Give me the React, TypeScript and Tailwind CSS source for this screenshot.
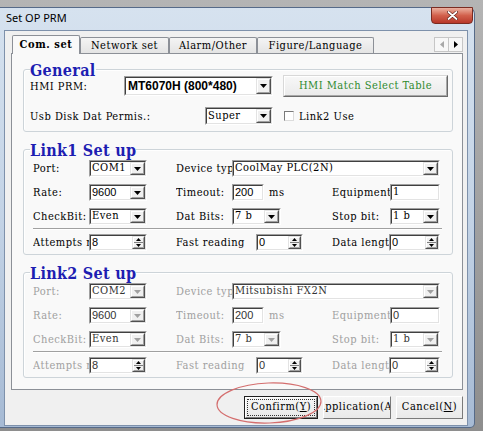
import React from 'react';

const SERIF = "font-['DejaVu_Serif_Condensed','DejaVu_Serif',serif] text-[11px] tracking-[0.5px] whitespace-nowrap";
const SANS = "font-['Liberation_Sans',Arial,sans-serif] text-[11px] whitespace-nowrap";

type Kids = { children?: React.ReactNode };

const Tri: React.FC<{ up?: boolean; grey?: boolean; small?: boolean }> = ({ up, grey, small }) => {
    const fill = grey ? '#a0a0a0' : '#000';
    if (small) {
        return (
            <svg width="5" height="3" viewBox="0 0 5 3">
                <path d={up ? 'M2.5 0L5 3H0z' : 'M0 0h5L2.5 3z'} fill={fill} />
            </svg>
        );
    }
    return (
        <svg width="7" height="4" viewBox="0 0 7 4">
            <path d="M0 0h7L3.5 4z" fill={fill} />
        </svg>
    );
};

// sunken classic field
const Field: React.FC<Kids & { className: string }> = ({ className, children }) => (
    <div className={`flex border border-t-[#a0a0a0] border-l-[#a0a0a0] border-b-white border-r-white ${className}`}>
        <div className="flex-1 min-w-0 flex border border-t-[#404040] border-l-[#404040] border-b-[#e3e3e3] border-r-[#e3e3e3] bg-white">
            {children}
        </div>
    </div>
);

const Raised: React.FC<Kids & { className: string }> = ({ className, children }) => (
    <div className={`flex border border-t-[#e3e3e3] border-l-[#e3e3e3] border-b-[#505050] border-r-[#505050] ${className}`}>
        <div className="flex-1 flex flex-col items-center justify-center border border-t-white border-l-white border-b-[#a0a0a0] border-r-[#a0a0a0] bg-[#f0f0f0]">
            {children}
        </div>
    </div>
);

const Combo: React.FC<{ w: string; h?: string; value: string; vcls?: string; grey?: boolean; dim?: boolean }> = ({ w, h = 'h-[17px]', value, vcls = SERIF, grey, dim }) => (
    <Field className={`${w} ${h}`}>
        <div className={`flex-1 min-w-0 overflow-hidden flex items-center pl-[1px] ${vcls} ${dim ? 'text-[#333]' : 'text-black'}`}>{value}</div>
        <Raised className="w-[15px]">
            <Tri grey={grey} />
        </Raised>
    </Field>
);

const Spin: React.FC<{ w: string; value: string; dim?: boolean }> = ({ w, value, dim }) => (
    <Field className={`${w} h-[17px]`}>
        <div className={`flex-1 min-w-0 flex items-center pl-[1px] ${SANS} ${dim ? 'text-[#333]' : 'text-black'}`}>{value}</div>
        <Raised className="w-[13px]">
            <Tri up small />
            <div className="w-full h-px bg-[#808080] my-[1px]" />
            <Tri small />
        </Raised>
    </Field>
);

const Input: React.FC<{ w: string; value: string; vcls: string; dim?: boolean }> = ({ w, value, vcls, dim }) => (
    <Field className={`${w} h-[17px]`}>
        <div className={`flex-1 flex items-center pl-[1px] ${vcls} ${dim ? 'text-[#333]' : 'text-black'}`}>{value}</div>
    </Field>
);

const Lbl: React.FC<Kids & { w: string; grey?: boolean }> = ({ w, grey, children }) => (
    <div className={`${w} shrink-0 overflow-hidden leading-[17px] ${SERIF} ${grey ? 'text-[#a0a0a0]' : 'text-black'}`}>{children}</div>
);

const Legend: React.FC<Kids> = ({ children }) => (
    <legend className="ml-[6px] pt-[4px] leading-[12px] font-['DejaVu_Serif_Condensed','DejaVu_Serif',serif] font-bold text-[16px] tracking-[0.3px] text-[#1e1eb2]">
        {children}
    </legend>
);

type LinkData = {
    title: string;
    port: string;
    device: string;
    equip: string;
    equipCls: string;
    off?: boolean;
};

const LinkBox: React.FC<LinkData> = ({ title, port, device, equip, equipCls, off }) => (
    <fieldset className="mt-[9px] border border-[#cdd4d9] rounded-[3px] shadow-[inset_1px_1px_0_#fff]">
        <Legend>{title}</Legend>
        <div className="pl-[9px] pb-[3px]">
            <div className="mt-[3px] flex items-center h-[17px]">
                <Lbl w="w-[56px]" grey={off}>Port:</Lbl>
                <Combo w="w-[58px]" value={port} grey={off} dim={off} />
                <div className="w-[29px]" />
                <Lbl w="w-[56px]" grey={off}>Device type</Lbl>
                <Combo w="w-[208px]" value={device} grey={off} dim={off} />
            </div>
            <div className="mt-[7px] flex items-center h-[17px]">
                <Lbl w="w-[56px]" grey={off}>Rate:</Lbl>
                <Combo w="w-[58px]" value="9600" vcls={SANS} grey={off} dim={off} />
                <div className="w-[29px]" />
                <Lbl w="w-[56px]" grey={off}>Timeout:</Lbl>
                <Input w="w-[32px]" value="200" vcls={SANS} dim={off} />
                <div className={`w-[68px] pl-[5px] leading-[17px] ${SERIF} ${off ? 'text-[#a0a0a0]' : 'text-black'}`}>ms</div>
                <Lbl w="w-[58px]" grey={off}>Equipment</Lbl>
                <Input w="w-[50px]" value={equip} vcls={equipCls} dim={off} />
            </div>
            <div className="mt-[7px] flex items-center h-[17px]">
                <Lbl w="w-[56px]" grey={off}>CheckBit:</Lbl>
                <Combo w="w-[58px]" value="Even" grey={off} dim={off} />
                <div className="w-[29px]" />
                <Lbl w="w-[56px]" grey={off}>Dat Bits:</Lbl>
                <Combo w="w-[49px]" value="7 b" grey={off} dim={off} />
                <div className="w-[51px]" />
                <Lbl w="w-[58px]" grey={off}>Stop bit:</Lbl>
                <Combo w="w-[50px]" value="1 b" grey={off} dim={off} />
            </div>
            <div className="mt-[3px] w-[409px] h-[2px] border-t border-b border-t-[#a0a0a0] border-b-white" />
            <div className="mt-[4px] flex items-center h-[17px]">
                <Lbl w="w-[56px]" grey={off}>Attempts number</Lbl>
                <Spin w="w-[58px]" value="8" dim={off} />
                <div className="w-[29px]" />
                <Lbl w="w-[80px]" grey={off}>Fast reading</Lbl>
                <Spin w="w-[47px]" value="0" dim={off} />
                <div className="w-[29px]" />
                <Lbl w="w-[57px]" grey={off}>Data length</Lbl>
                <Spin w="w-[51px]" value="0" dim={off} />
            </div>
        </div>
    </fieldset>
);

const Tab: React.FC<Kids & { w: string }> = ({ w, children }) => (
    <div className={`${w} h-[16px] shrink-0 flex items-center justify-center border border-b-0 border-[#8c9097] rounded-t-[2px] bg-gradient-to-b from-[#f4f4f4] to-[#e4e4e4] ${SERIF} leading-[14px] text-black`}>
        {children}
    </div>
);

const PushBtn: React.FC<Kids & { w: string; def?: boolean }> = ({ w, def, children }) => (
    <div className={`${w} h-[23px] flex ${def ? 'border border-[#202020]' : ''}`}>
        <div className="flex-1 min-w-0 flex border border-t-white border-l-white border-b-[#7a7a7a] border-r-[#7a7a7a] bg-gradient-to-b from-[#f6f6f6] to-[#e9e9e9]">
            <div className={`flex-1 min-w-0 overflow-hidden flex items-center justify-center ${def ? 'm-[1px] border border-dotted border-[#333]' : ''} ${SERIF} text-black`}>
                {children}
            </div>
        </div>
    </div>
);

export default function App() {
    return (
        <div className="relative w-[483px] h-[431px] overflow-hidden bg-gradient-to-b from-[#b4b4b4] to-[#8e8e8e] pt-[7px]">
            <div className="w-[475px] h-[421px] flex flex-col pl-[4px] pr-[6px] pb-[1px] border-t border-r border-b border-[#566a88] rounded-tr-[7px] rounded-br-[5px] bg-gradient-to-b from-[#d6e2ef] via-[#c3d3e6] to-[#a6bad4]">
                {/* title bar */}
                <div className="h-[22px] shrink-0 flex items-start justify-between">
                    <div className="pl-[2px] pt-[3px] font-['Noto_Sans',sans-serif] text-[11px] leading-[14px] text-black">Set OP PRM</div>
                    <div className="-mt-px mr-[-5px] w-[42px] h-[17px] rounded-b-[4px] border border-[#7a2c22] bg-gradient-to-b from-[#eab0a0] via-[#d2604c] to-[#b8372a] flex items-center justify-center">
                        <svg width="11" height="9" viewBox="0 0 11 9">
                            <path d="M1.5 1l8 7M9.5 1l-8 7" stroke="#5a1a12" strokeWidth="3" strokeLinecap="round" />
                            <path d="M1.5 1l8 7M9.5 1l-8 7" stroke="#fff" strokeWidth="1.8" strokeLinecap="round" />
                        </svg>
                    </div>
                </div>

                {/* client */}
                <div className="flex-1 flex flex-col border border-[#7e91ab] bg-[#f0f0f0] pt-[4px] pl-[6px] pr-[4px]">
                    {/* tabs */}
                    <div className="flex items-end h-[18px] pl-[1px]">
                        <div className="w-[68px] h-[19px] -mb-px relative z-10 shrink-0 flex items-center justify-center border border-b-0 border-[#8c9097] rounded-t-[2px] bg-[#f9f9f9] font-['DejaVu_Serif_Condensed','DejaVu_Serif',serif] text-[11px] font-bold tracking-[0.6px] whitespace-nowrap leading-[14px] text-black">
                            Com. set
                        </div>
                        <Tab w="w-[89px]">Network set</Tab>
                        <Tab w="w-[88px]">Alarm/Other</Tab>
                        <Tab w="w-[117px]">Figure/Language</Tab>
                        <div className="ml-auto mb-px flex">
                            <div className="w-[15px] h-[15px] flex items-center justify-center border border-[#c6c6c6] bg-[#f7f7f7]">
                                <svg width="4" height="7" viewBox="0 0 4 7"><path d="M4 0v7L0 3.5z" fill="#a8a8a8" /></svg>
                            </div>
                            <div className="w-[15px] h-[15px] -ml-px flex items-center justify-center border border-[#c6c6c6] bg-[#f7f7f7]">
                                <svg width="4" height="7" viewBox="0 0 4 7"><path d="M0 0v7L4 3.5z" fill="#000" /></svg>
                            </div>
                        </div>
                    </div>

                    {/* tab page */}
                    <div className="h-[337px] shrink-0 border border-[#8c9097] bg-[#f9f9f9] pt-[7px] pl-[11px] pr-[9px]">
                        <fieldset className="border border-[#cdd4d9] rounded-[3px] shadow-[inset_1px_1px_0_#fff]">
                            <Legend>General</Legend>
                            <div className="pl-[6px] pb-[6px]">
                                <div className="-mt-[2px] h-[22px] flex items-center">
                                    <Lbl w="w-[94px]">HMI PRM:</Lbl>
                                    <Combo w="w-[149px]" h="h-[20px]" value="MT6070H (800*480)" vcls="font-['Liberation_Sans',Arial,sans-serif] font-bold text-[12px] whitespace-nowrap pl-[2px]" />
                                    <div className="ml-[10px] w-[165px] h-[22px] flex border border-t-[#d8d8d8] border-l-[#d8d8d8] border-b-[#6a6a6a] border-r-[#6a6a6a]">
                                        <div className={`flex-1 flex items-center justify-center border border-t-white border-l-white border-b-[#a8a8a8] border-r-[#a8a8a8] bg-gradient-to-b from-[#f7f7f7] to-[#ebebeb] ${SERIF} text-[#2f8a2f]`}>
                                            HMI Match Select Table
                                        </div>
                                    </div>
                                </div>
                                <div className="mt-[10px] h-[18px] flex items-center">
                                    <Lbl w="w-[175px]">Usb Disk Dat Permis.:</Lbl>
                                    <Combo w="w-[68px]" h="h-[18px]" value="Super" />
                                    <div className="ml-[11px] w-[10px] h-[10px] border border-t-[#7a7a7a] border-l-[#7a7a7a] border-b-[#dcdcdc] border-r-[#dcdcdc] bg-white" />
                                    <div className={`ml-[5px] leading-[17px] ${SERIF} text-black`}>Link2 Use</div>
                                </div>
                            </div>
                        </fieldset>

                        <LinkBox title="Link1 Set up" port="COM1" device="CoolMay PLC(2N)" equip="1" equipCls={SERIF} />
                        <LinkBox title="Link2 Set up" port="COM2" device="Mitsubishi FX2N" equip="0" equipCls={SANS} off />
                    </div>

                    {/* bottom buttons */}
                    <div className="mt-[6px] flex justify-end gap-[5px]">
                        <PushBtn w="w-[74px]" def>
                            Confirm(<span className="underline">Y</span>)
                        </PushBtn>
                        <PushBtn w="w-[68px]">Application(A)</PushBtn>
                        <PushBtn w="w-[67px]">
                            Cancel(<span className="underline">N</span>)
                        </PushBtn>
                    </div>
                </div>
            </div>

            {/* hand-drawn annotation */}
            <svg className="absolute left-[215px] top-[381px] pointer-events-none" width="108" height="44" viewBox="0 0 108 44">
                <ellipse cx="54" cy="22" rx="52" ry="20" fill="none" stroke="#d46e6e" strokeWidth="1.2" transform="rotate(-2 54 22)" />
            </svg>
        </div>
    );
}
